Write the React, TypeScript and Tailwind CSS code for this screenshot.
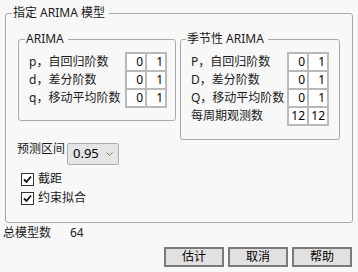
import React from "react";

const rowsA = [
  { label: "p，自回归阶数", a: "0", b: "1" },
  { label: "d，差分阶数", a: "0", b: "1" },
  { label: "q，移动平均阶数", a: "0", b: "1" },
];

const rowsS = [
  { label: "P，自回归阶数", a: "0", b: "1" },
  { label: "D，差分阶数", a: "0", b: "1" },
  { label: "Q，移动平均阶数", a: "0", b: "1" },
  { label: "每周期观测数", a: "12", b: "12" },
];

function OrderTable({ rows }: { rows: { label: string; a: string; b: string }[] }) {
  return (
    <div className="flex mt-[5px]">
      <div className="flex flex-col w-[96px] pt-[2px] gap-[2px]">
        {rows.map((r) => (
          <div key={r.label} className="h-[16px] leading-[16px] whitespace-nowrap">
            {r.label}
          </div>
        ))}
      </div>
      <div className="grid grid-cols-[18px_18px] gap-[2px] p-[2px] bg-[#b9b9b9]">
        {rows.map((r) => (
          <React.Fragment key={r.label}>
            <div className="h-[16px] leading-[16px] bg-white text-right pr-[2px] text-black">{r.a}</div>
            <div className="h-[16px] leading-[16px] bg-white text-right pr-[2px] text-black">{r.b}</div>
          </React.Fragment>
        ))}
      </div>
    </div>
  );
}

function Check({ label }: { label: string }) {
  return (
    <div className="flex items-center h-[16px] ml-[15px]">
      <div className="w-[13px] h-[13px] border border-[#333] bg-white flex items-center justify-center">
        <svg width="11" height="11" viewBox="0 0 11 11">
          <path d="M2 5.5 L4.5 8 L9 2.5" fill="none" stroke="#111" strokeWidth="1.8" />
        </svg>
      </div>
      <span className="ml-[4px] leading-[16px]">{label}</span>
    </div>
  );
}

export default function App() {
  return (
    <div className="w-[358px] h-[272px] bg-[#f8f8f8] pt-[5px] text-[12px] text-[#1a1a1a] font-['Noto_Sans','Noto_Sans_CJK_SC',sans-serif]">
      <fieldset className="ml-[5px] w-[348px] h-[218px] border border-[#a8a8a8] rounded-[3px]">
        <legend className="ml-[6px] pl-[1px] pr-[4px] leading-[16px]">指定 ARIMA 模型</legend>
        <div className="flex items-start gap-[4px] ml-[12px] mt-[10px]">
          <fieldset className="w-[158px] h-[90px] border border-[#a8a8a8] rounded-[3px]">
            <legend className="ml-[6px] pl-[1px] pr-[4px] leading-[16px]">ARIMA</legend>
            <div className="pl-[10px]">
              <OrderTable rows={rowsA} />
            </div>
          </fieldset>
          <fieldset className="w-[160px] h-[109px] border border-[#a8a8a8] rounded-[3px]">
            <legend className="ml-[5px] pl-[1px] pr-[4px] leading-[16px]">季节性 ARIMA</legend>
            <div className="pl-[10px]">
              <OrderTable rows={rowsS} />
            </div>
          </fieldset>
        </div>
        <div className="flex items-start mt-[1px] ml-[11px]">
          <span className="leading-[16px] w-[50px]">预测区间</span>
          <div className="mt-[2px] w-[52px] h-[22px] border border-[#adadad] bg-[#e5e5e5] flex items-center justify-between pl-[5px] pr-[5px] rounded-[2px]">
            <span className="text-[13px] text-black">0.95</span>
            <svg width="7" height="5" viewBox="0 0 7 5">
              <path d="M0.5 0.5 L3.5 3.5 L6.5 0.5" fill="none" stroke="#777" strokeWidth="1" />
            </svg>
          </div>
        </div>
        <div className="flex flex-col gap-[3px] mt-[6px]">
          <Check label="截距" />
          <Check label="约束拟合" />
        </div>
      </fieldset>
      <div className="flex mt-[2px] ml-[3px] h-[16px] leading-[16px]">
        <span className="w-[67px]">总模型数</span>
        <span>64</span>
      </div>
      <div className="flex justify-end gap-[4px] mt-[6px] pr-[6px]">
        {["估计", "取消", "帮助"].map((t) => (
          <button
            key={t}
            className="w-[60px] h-[20px] border-2 border-[#7a7a7a] bg-[#e1e1e1] text-[12px] leading-[16px] text-black"
          >
            {t}
          </button>
        ))}
      </div>
    </div>
  );
}
